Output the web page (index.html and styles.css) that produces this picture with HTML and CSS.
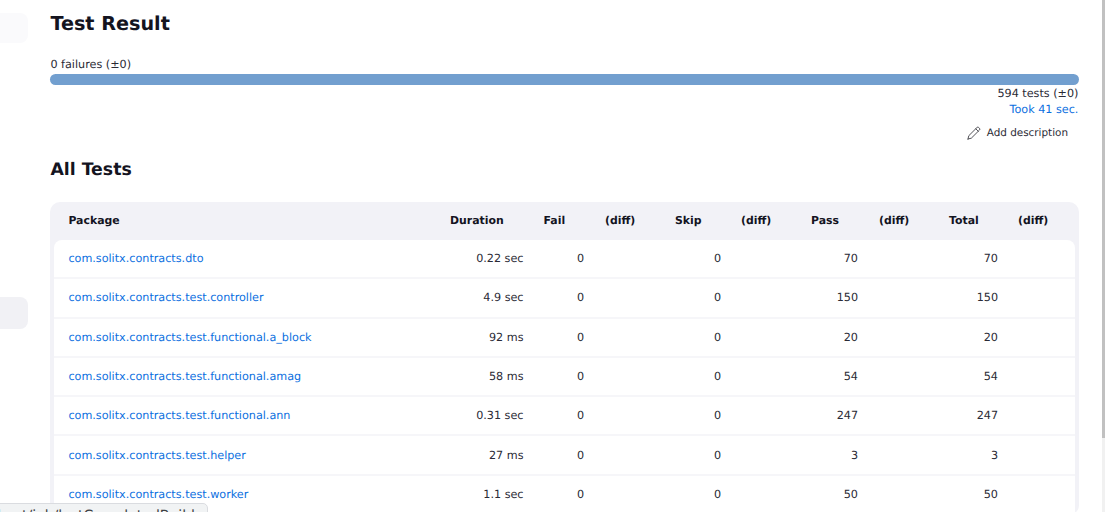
FILE: index.html
```html
<!DOCTYPE html>
<html lang="en">
<head>
<meta charset="utf-8">
<title>Test Result</title>
<link rel="stylesheet" href="styles.css">
</head>
<body>
<div class="page">
  <aside class="sidebar">
    <div class="side-item side-faint"></div>
    <div class="side-item side-active"></div>
  </aside>
  <main class="main">
    <h1 class="title">Test Result</h1>
    <div class="summary">0 failures (±0)</div>
    <div class="bar"></div>
    <div class="right-line">594 tests (±0)</div>
    <div class="right-line took"><a href="#">Took 41 sec.</a></div>
    <div class="desc-row">
      <a class="desc" href="#">
        <svg class="pencil" viewBox="0 0 14 14" width="14" height="14" fill="none" stroke="#3f3f46" stroke-width="0.9" stroke-linejoin="round" stroke-linecap="round"><path d="M1 13l.8-3.3L10 1.5a1.2 1.2 0 0 1 1.7 0l.8.8a1.2 1.2 0 0 1 0 1.7l-8.2 8.2L1 13z"/><path d="M8.8 2.8l2.5 2.5"/></svg>
        <span>Add description</span>
      </a>
    </div>
    <h2 class="subtitle">All Tests</h2>
    <div class="table-wrap">
      <table class="results">
        <colgroup>
          <col><col class="c-dur"><col class="c-fail"><col class="c-diff"><col class="c-skip"><col class="c-diff"><col class="c-pass"><col class="c-diff"><col class="c-total"><col class="c-last">
        </colgroup>
        <thead>
          <tr><th>Package</th><th>Duration</th><th>Fail</th><th>(diff)</th><th>Skip</th><th>(diff)</th><th>Pass</th><th>(diff)</th><th>Total</th><th>(diff)</th></tr>
        </thead>
        <tbody>
          <tr><td><a href="#">com.solitx.contracts.dto</a></td><td class="n">0.22 sec</td><td class="n">0</td><td></td><td class="n">0</td><td></td><td class="n">70</td><td></td><td class="n">70</td><td></td></tr>
          <tr><td><a href="#">com.solitx.contracts.test.controller</a></td><td class="n">4.9 sec</td><td class="n">0</td><td></td><td class="n">0</td><td></td><td class="n">150</td><td></td><td class="n">150</td><td></td></tr>
          <tr><td><a href="#">com.solitx.contracts.test.functional.a_block</a></td><td class="n">92 ms</td><td class="n">0</td><td></td><td class="n">0</td><td></td><td class="n">20</td><td></td><td class="n">20</td><td></td></tr>
          <tr><td><a href="#">com.solitx.contracts.test.functional.amag</a></td><td class="n">58 ms</td><td class="n">0</td><td></td><td class="n">0</td><td></td><td class="n">54</td><td></td><td class="n">54</td><td></td></tr>
          <tr><td><a href="#">com.solitx.contracts.test.functional.ann</a></td><td class="n">0.31 sec</td><td class="n">0</td><td></td><td class="n">0</td><td></td><td class="n">247</td><td></td><td class="n">247</td><td></td></tr>
          <tr><td><a href="#">com.solitx.contracts.test.helper</a></td><td class="n">27 ms</td><td class="n">0</td><td></td><td class="n">0</td><td></td><td class="n">3</td><td></td><td class="n">3</td><td></td></tr>
          <tr><td><a href="#">com.solitx.contracts.test.worker</a></td><td class="n">1.1 sec</td><td class="n">0</td><td></td><td class="n">0</td><td></td><td class="n">50</td><td></td><td class="n">50</td><td></td></tr>
        </tbody>
      </table>
    </div>
  </main>
  <div class="scrollbar"><div class="thumb"></div></div>
</div>
<div class="status"><span>localhost/job/lastCompletedBuild</span></div>
</body>
</html>
```
FILE: styles.css
```css
html, body {
  margin: 0;
  height: 100%;
  overflow: hidden;
  background: #fff;
}
body {
  font-family: "DejaVu Sans", sans-serif;
  font-size: 11.2px;
  color: #14141f;
  text-rendering: geometricPrecision;
}
a { color: #0b6fe0; text-decoration: none; }
.page {
  display: flex;
  height: 512px;
  overflow: hidden;
}
.sidebar {
  width: 50.4px;
  flex: none;
  display: flex;
  flex-direction: column;
  padding-top: 13px;
  box-sizing: border-box;
}
.side-item {
  width: 28px;
  border-radius: 0 8px 8px 0;
}
.side-faint { height: 30px; background: #fafafc; }
.side-active { height: 32px; margin-top: 254px; background: #f1f1f5; }
.main {
  flex: 1;
  min-width: 0;
  padding-top: 12px;
  margin-right: 23px;
}
.title {
  margin: 0;
  font-size: 19.2px;
  line-height: 23px;
  font-weight: 700;
  color: #14141f;
}
.summary {
  margin-top: 23px;
  line-height: 13px;
  color: #2a2a35;
}
.bar {
  margin-top: 3px;
  height: 11px;
  border-radius: 6px;
  background: #729fcf;
}
.right-line {
  text-align: right;
  line-height: 13px;
  margin-top: 2px;
  padding-right: 0.6px;
  color: #2a2a35;
}
.took { margin-top: 3px; }
.desc-row {
  display: flex;
  justify-content: flex-end;
  margin-top: 10px;
  padding-right: 11px;
}
.desc {
  display: flex;
  align-items: center;
  gap: 6px;
  color: #2a2a35;
  font-size: 10.4px;
  line-height: 14px;
}
.subtitle {
  margin: 20px 0 0;
  font-size: 17.3px;
  line-height: 21px;
  font-weight: 700;
  color: #14141f;
}
.table-wrap {
  margin-top: 21px;
  background: #f2f2f7;
  border-radius: 10px;
  padding: 0 4px;
}
.results {
  width: 100%;
  table-layout: fixed;
  border-collapse: separate;
  border-spacing: 0;
}
.c-dur { width: 93.5px; }
.c-fail { width: 61.5px; }
.c-diff { width: 70px; }
.c-skip { width: 66px; }
.c-pass { width: 68px; }
.c-total { width: 69px; }
.c-last { width: 67px; }
.results th {
  height: 38px;
  padding: 0 10px 2px;
  box-sizing: border-box;
  text-align: left;
  font-size: 10.9px;
  font-weight: 700;
  color: #14141f;
}
.results th:first-child, .results td:first-child { padding-left: 14px; }
.results td {
  height: 37.3px;
  padding: 0 10px;
  background: #fff;
  border-bottom: 2px solid #f6f6f9;
  color: #2a2a35;
}
.results td:nth-child(3) { padding-right: 11px; }
.results td:nth-child(7) { padding-right: 11px; }
.results tbody tr:first-child td:first-child { border-top-left-radius: 8px; }
.results tbody tr:first-child td:last-child { border-top-right-radius: 8px; }
.results td.n { text-align: right; }
.scrollbar {
  width: 3px;
  flex: none;
  background: #f1f1f1;
}
.thumb {
  height: 438px;
  background: #c1c1c1;
}
.status {
  position: fixed;
  left: -1px;
  bottom: -11px;
  width: 209px;
  height: 20px;
  box-sizing: border-box;
  display: flex;
  justify-content: flex-end;
  background: #f1f3f4;
  border: 1px solid #dadce0;
  border-top-right-radius: 5px;
  padding: 3px 12px 0 0;
  font-size: 14px;
  line-height: 18px;
  color: #3c4043;
  white-space: nowrap;
  overflow: hidden;
}
```
